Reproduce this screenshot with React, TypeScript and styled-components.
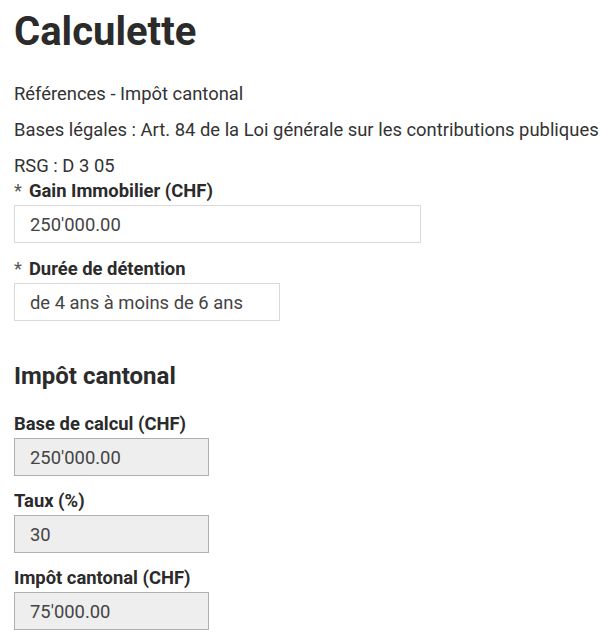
import React from 'react';
import styled, { createGlobalStyle } from 'styled-components';

const GlobalStyle = createGlobalStyle`
  body {
    margin: 0;
    background: #fff;
    font-family: Roboto, 'Liberation Sans', sans-serif;
    color: #333;
  }
`;

const Page = styled.div`
  display: flex;
  flex-direction: column;
  padding: 8px 14px 0 14px;
`;

const Title = styled.h1`
  margin: 0 0 26.7px 0;
  font-size: 40px;
  line-height: 48px;
  font-weight: 700;
  color: #2b2b2b;
`;

const Info = styled.p`
  margin: 0 0 14px 0;
  font-size: 18.4px;
  line-height: 22px;
  white-space: nowrap;
  &:last-of-type {
    margin-bottom: 3px;
  }
`;

const Field = styled.div<{ $gap: number }>`
  display: flex;
  flex-direction: column;
  gap: 3.3px;
  margin-bottom: ${p => p.$gap}px;
`;

const Label = styled.label`
  font-size: 18.4px;
  line-height: 22px;
  font-weight: 700;
  color: #2b2b2b;
`;

const Star = styled.span`
  font-weight: 400;
  color: #555;
  margin-right: 7px;
`;

const Input = styled.div<{ $width: number; $readOnly?: boolean }>`
  box-sizing: border-box;
  width: ${p => p.$width}px;
  height: 38px;
  display: flex;
  align-items: center;
  padding: 1px 15px 0 15px;
  font-size: 18.4px;
  color: #444;
  border: 1px solid ${p => (p.$readOnly ? '#b0b0b0' : '#d9d9d9')};
  background: ${p => (p.$readOnly ? '#eeeeee' : '#ffffff')};
`;

const Section = styled.h3`
  margin: 40.8px 0 22.9px 0;
  font-size: 24px;
  line-height: 28px;
  font-weight: 700;
  color: #2b2b2b;
`;

export default function App() {
  return (
    <Page>
      <GlobalStyle />
      <Title>Calculette</Title>
      <Info>Références - Impôt cantonal</Info>
      <Info>Bases légales : Art. 84 de la Loi générale sur les contributions publiques</Info>
      <Info>RSG : D 3 05</Info>
      <Field $gap={14.7}>
        <Label>
          <Star>*</Star>Gain Immobilier (CHF)
        </Label>
        <Input $width={407}>250'000.00</Input>
      </Field>
      <Field $gap={0}>
        <Label>
          <Star>*</Star>Durée de détention
        </Label>
        <Input $width={266}>de 4 ans à moins de 6 ans</Input>
      </Field>
      <Section>Impôt cantonal</Section>
      <Field $gap={13.7}>
        <Label>Base de calcul (CHF)</Label>
        <Input $width={195} $readOnly>250'000.00</Input>
      </Field>
      <Field $gap={13.7}>
        <Label>Taux (%)</Label>
        <Input $width={195} $readOnly>30</Input>
      </Field>
      <Field $gap={0}>
        <Label>Impôt cantonal (CHF)</Label>
        <Input $width={195} $readOnly>75'000.00</Input>
      </Field>
    </Page>
  );
}
